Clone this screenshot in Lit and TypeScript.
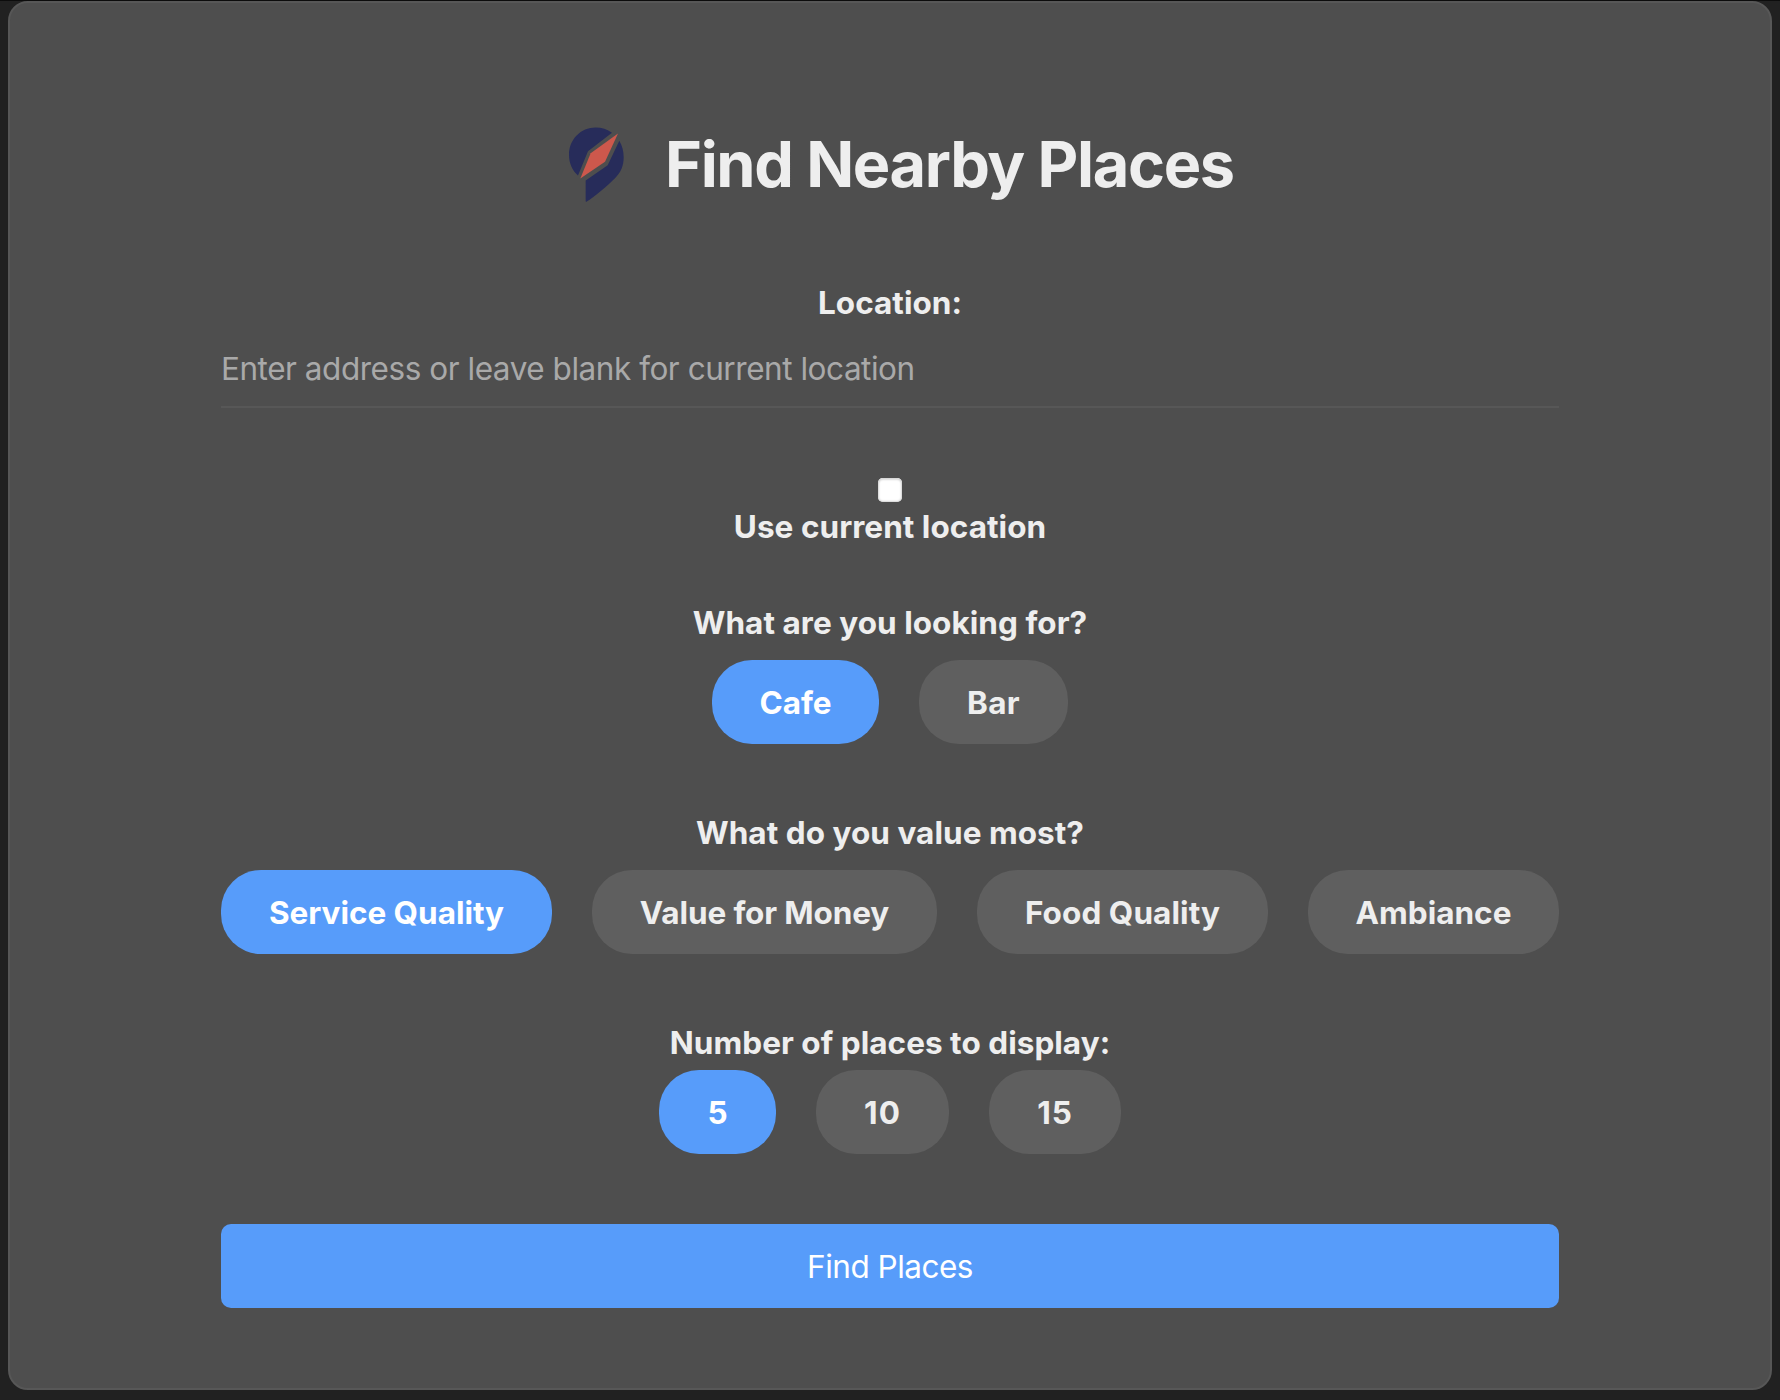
import { LitElement, html, css } from "lit";
import { customElement, property, state } from "lit/decorators.js";
import { classMap } from "lit/directives/class-map.js";
import { styleMap } from "lit/directives/style-map.js";

interface Option {
  label: string;
  width: number;
  spacing?: number;
}

@customElement("choice-group")
class ChoiceGroup extends LitElement {
  @property({ attribute: false }) options: Option[] = [];
  @state() selected = 0;

  static styles = css`
    :host {
      display: flex;
      justify-content: center;
      gap: 40px;
    }
    .choice {
      box-sizing: border-box;
      height: 84px;
      padding: 1px 0 0;
      border: 0;
      border-radius: 40px;
      background: #5f5f5f;
      color: #eeeeee;
      font: 700 31.5px/83px Inter, sans-serif;
      text-align: center;
      white-space: nowrap;
    }
    .active {
      background: #579cfa;
      color: #ffffff;
    }
  `;

  render() {
    return this.options.map(
      (o, i) => html`<button
        class=${classMap({ choice: true, active: i === this.selected })}
        style=${styleMap({ width: `${o.width}px`, letterSpacing: `${o.spacing ?? 0.08}px` })}
        @click=${() => (this.selected = i)}
      >${o.label}</button>`
    );
  }
}

@customElement("app-root")
class AppRoot extends LitElement {
  static styles = css`
    :host {
      display: block;
      box-sizing: border-box;
      height: 1400px;
      padding: 0 8px;
      border-top: 1px solid #0c0c0c;
      background: #212121;
      font-family: Inter, sans-serif;
      color: #eeeeee;
      overflow: hidden;
    }
    .card {
      box-sizing: border-box;
      height: 1389px;
      padding: 121px 211px 0;
      border: 2px solid #575757;
      border-radius: 20px;
      background: #4e4e4e;
      display: flex;
      flex-direction: column;
    }
    .header {
      display: flex;
      align-items: center;
      height: 80px;
      padding-left: 348px;
      gap: 41px;
    }
    .logo {
      width: 55px;
      height: 76px;
      margin-top: 1px;
      flex: none;
    }
    .title {
      margin: 0;
      font-size: 63px;
      line-height: 80px;
      font-weight: 700;
      letter-spacing: -1.35px;
      white-space: nowrap;
    }
    .label {
      font-size: 31.5px;
      line-height: 38px;
      font-weight: 700;
      letter-spacing: 0.04px;
      text-align: center;
    }
    .location { margin-top: 80px; }
    .address {
      box-sizing: border-box;
      height: 78px;
      margin-top: 8px;
      padding: 0;
      border: 0;
      border-bottom: 2px solid #575757;
      border-radius: 0;
      background: transparent;
      outline: none;
      color: #eeeeee;
      font: 400 31.5px/76px Inter, sans-serif;
      letter-spacing: -0.46px;
    }
    .address::placeholder { color: #a9a9a9; opacity: 1; }
    .check {
      appearance: none;
      align-self: center;
      width: 24px;
      height: 24px;
      margin: 70px 0 0;
      border-radius: 5px;
      background: #ffffff;
      box-shadow: inset 0 0 2px 1px #d2d2d2, inset 0 2px 2px #e4e4e4;
    }
    .use { margin-top: 6px; }
    .looking { margin-top: 58px; }
    .value { margin-top: 70px; }
    .count { margin-top: 70px; }
    .gap { margin-top: 18px; }
    .gap-small { margin-top: 8px; }
    .submit {
      height: 84px;
      margin-top: 70px;
      padding: 1px 0 0;
      border: 0;
      border-radius: 10px;
      background: #579cfa;
      color: #ffffff;
      font: 400 31.5px/83px Inter, sans-serif;
      letter-spacing: -0.5px;
    }
  `;

  private kinds: Option[] = [
    { label: "Cafe", width: 167, spacing: 0 },
    { label: "Bar", width: 149, spacing: 0.3 },
  ];
  private values: Option[] = [
    { label: "Service Quality", width: 331, spacing: -0.03 },
    { label: "Value for Money", width: 345, spacing: -0.12 },
    { label: "Food Quality", width: 291 },
    { label: "Ambiance", width: 251, spacing: 0 },
  ];
  private counts: Option[] = [
    { label: "5", width: 117 },
    { label: "10", width: 133, spacing: 1 },
    { label: "15", width: 132, spacing: 1 },
  ];

  render() {
    return html`
      <main class="card">
        <header class="header">
          <svg class="logo" viewBox="57 50 165 227">
            <path fill="#272c5a" d="M84 195C67 181 57 159 57 133C57 87 92 51 137 51C155 51 172 56 186 67L114 122Z" />
            <path fill="#272c5a" d="M208 91C217 107 221 123 221 140C221 166 212 186 195 203C174 224 134 258 109 274Q107 275 107 271V210L173 164Z" />
            <path fill="#cd584c" d="M204 69L165 154L91 204L122 128Z" />
          </svg>
          <h1 class="title">Find Nearby Places</h1>
        </header>
        <label class="label location">Location:</label>
        <input class="address" type="text" placeholder="Enter address or leave blank for current location" />
        <input class="check" type="checkbox" />
        <label class="label use">Use current location</label>
        <label class="label looking">What are you looking for?</label>
        <choice-group class="gap" .options=${this.kinds}></choice-group>
        <label class="label value">What do you value most?</label>
        <choice-group class="gap" .options=${this.values}></choice-group>
        <label class="label count">Number of places to display:</label>
        <choice-group class="gap-small" .options=${this.counts}></choice-group>
        <button class="submit">Find Places</button>
      </main>
    `;
  }
}
